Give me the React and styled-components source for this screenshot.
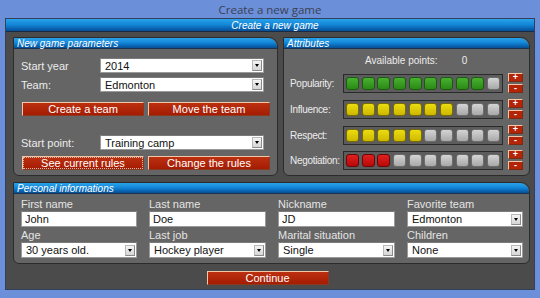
import React from "react";
import styled, { createGlobalStyle, css } from "styled-components";

const Global = createGlobalStyle`
  html, body { margin: 0; padding: 0; }
  body { background: #6b8fd8; font-family: "Liberation Sans", Arial, sans-serif; }
  * { box-sizing: border-box; }
`;

const Root = styled.div`
  width: 540px;
  height: 298px;
  display: flex;
  flex-direction: column;
  padding: 0 5px 8px 5px;
  background: #6b8fd8;
`;

const TitleBar = styled.div`
  height: 18px;
  display: flex;
  align-items: center;
  justify-content: center;
  font-family: "Open Sans", "Liberation Sans", sans-serif;
  font-size: 11.5px;
  color: #3a3f55;
  padding-top: 1px;
`;

const Frame = styled.div`
  flex: 1;
  display: flex;
  flex-direction: column;
  background: #4b4b4b;
  border: 1px solid #33405a;
`;

const blueBar = css`
  background: linear-gradient(#2aa2ea 0%, #1488d8 45%, #0a68b8 75%, #064f92 100%);
  color: #fff;
  font-style: italic;
  font-size: 10px;
  display: flex;
  align-items: center;
`;

const FrameHeader = styled.div`
  ${blueBar};
  height: 13px;
  justify-content: center;
  border-bottom: 1px solid #1b2a44;
  padding-left: 10px;
`;

const Content = styled.div`
  flex: 1;
  display: flex;
  flex-direction: column;
  padding: 5px 4px 0 7px;
`;

const TopRow = styled.div`
  display: grid;
  grid-template-columns: 265px 1fr;
  column-gap: 5px;
  height: 139px;
`;

const Panel = styled.div`
  display: flex;
  flex-direction: column;
  background: #656565;
  border: 1px solid #2c2c2c;
  border-radius: 0 9px 6px 6px;
  overflow: hidden;
  height: ${(p) => p.$h}px;
  margin-top: ${(p) => p.$mt || 0}px;
`;

const PanelHeader = styled.div`
  ${blueBar};
  height: 11px;
  padding-left: 3px;
  border-bottom: 1px solid #1d3150;
  border-top-right-radius: 9px;
  flex: none;
`;

const ParamsBody = styled.div`
  padding: 9px 13px 0 7px;
  display: flex;
  flex-direction: column;
`;

const FieldRow = styled.div`
  display: grid;
  grid-template-columns: 79px 164px;
  align-items: center;
  height: 15px;
  margin-top: ${(p) => p.$mt || 0}px;
`;

const Label = styled.span`
  color: #ececec;
  font-size: ${(p) => p.$fs || 11}px;
  letter-spacing: ${(p) => p.$ls || 0}px;
  white-space: nowrap;
`;

const SelectBox = styled.div`
  height: ${(p) => p.$h || 15}px;
  width: 100%;
  background: #fff;
  border: 1px solid #9a9a9a;
  border-top-color: #7a7a7a;
  display: flex;
  align-items: center;
  padding: 0 1px 0 4px;
  font-size: 11px;
  color: #111;
`;

const SelectText = styled.span`
  flex: 1;
  white-space: nowrap;
  overflow: hidden;
`;

const ArrowBtn = styled.span`
  width: 10px;
  height: 11px;
  background: linear-gradient(#f4f4f4, #d6d6d6);
  border: 1px solid #b8b8b8;
  border-right-color: #8a8a8a;
  border-bottom-color: #8a8a8a;
  display: flex;
  align-items: center;
  justify-content: center;
  &::after {
    content: "";
    border-left: 2.5px solid transparent;
    border-right: 2.5px solid transparent;
    border-top: 3px solid #000;
  }
`;

function Select({ value, h }) {
  return (
    <SelectBox $h={h}>
      <SelectText>{value}</SelectText>
      <ArrowBtn />
    </SelectBox>
  );
}

const ButtonRow = styled.div`
  display: grid;
  grid-template-columns: 122px 122px;
  column-gap: 4px;
  margin-top: ${(p) => p.$mt || 0}px;
  margin-left: 1px;
`;

const RedButton = styled.button`
  height: 14px;
  padding: 0;
  background: linear-gradient(#bc3010, #a41c02);
  border: 1px solid #f0c8a8;
  border-right-color: #8a3a20;
  border-bottom-color: #8a3a20;
  color: #fff;
  font-family: "Liberation Sans", Arial, sans-serif;
  font-size: 11px;
  line-height: 12px;
  cursor: pointer;
  ${(p) =>
    p.$focus &&
    css`
      outline: 1px dotted #d8b8a8;
      outline-offset: -2px;
    `}
`;

const AttrBody = styled.div`
  display: flex;
  flex-direction: column;
  padding: 5px 6px 0 6px;
`;

const Available = styled.div`
  display: flex;
  gap: 24px;
  color: #ececec;
  font-size: 10px;
  height: 12px;
  align-items: center;
  padding-left: 75px;
`;

const AttrRow = styled.div`
  display: grid;
  grid-template-columns: 53px 160px 20px;
  align-items: center;
  height: 20px;
  margin-top: ${(p) => p.$mt}px;
`;

const Bar = styled.div`
  height: 19px;
  border: 1px solid #2a2a2a;
  background: #5c5c5c;
  display: flex;
  align-items: center;
  justify-content: space-between;
  padding: 0 2px;
`;

const cellColors = {
  green: ["#48b030", "#2a8a16", "#1c5a0e"],
  yellow: ["#ecdc10", "#ccb800", "#7a6c00"],
  red: ["#e02020", "#b80808", "#6a0606"],
  gray: ["#d4d4d4", "#a8a8a8", "#6c6c6c"],
};

const Cell = styled.span`
  width: 13px;
  height: 13px;
  border-radius: 3px;
  background: linear-gradient(
    ${(p) => cellColors[p.$c][0]},
    ${(p) => cellColors[p.$c][1]}
  );
  border: 1px solid ${(p) => cellColors[p.$c][2]};
`;

const PmCol = styled.div`
  display: flex;
  flex-direction: column;
  gap: 2px;
  margin-left: 5px;
`;

const PmBtn = styled.span`
  width: 15px;
  height: 9px;
  background: #b42408;
  border: 1px solid #f0c8a8;
  border-right-color: #7a2a10;
  border-bottom-color: #7a2a10;
  color: #fff;
  font-size: 9px;
  line-height: 7px;
  font-weight: bold;
  display: flex;
  justify-content: center;
`;

const PersonalGrid = styled.div`
  display: grid;
  grid-template-columns: 116px 117px 117px 116px;
  column-gap: 12px;
  padding: 4px 0 0 7px;
`;

const FieldCol = styled.div`
  display: flex;
  flex-direction: column;
`;

const SmallLabel = styled.span`
  color: #e4e4e4;
  font-size: 11px;
  height: ${(p) => p.$h}px;
  display: flex;
  align-items: flex-end;
  padding-bottom: 1px;
`;

const TextInput = styled.input`
  height: 16px;
  width: 100%;
  border: 1px solid #9a9a9a;
  border-top-color: #7a7a7a;
  padding: 0 3px;
  font-family: "Liberation Sans", Arial, sans-serif;
  font-size: 11px;
  color: #111;
  outline: none;
`;

const Footer = styled.div`
  display: flex;
  justify-content: center;
  margin-top: 7px;
  padding-right: 8px;
`;

const ContinueButton = styled(RedButton)`
  width: 122px;
  height: 14px;
`;

const attrs = [
  { name: "Popularity:", n: 9, c: "green", mt: 7 },
  { name: "Influence:", n: 7, c: "yellow", mt: 6 },
  { name: "Respect:", n: 5, c: "yellow", mt: 6 },
  { name: "Negotiation:", n: 3, c: "red", mt: 5 },
];

export default function App() {
  return (
    <>
      <Global />
      <Root>
        <TitleBar>Create a new game</TitleBar>
        <Frame>
          <FrameHeader>Create a new game</FrameHeader>
          <Content>
            <TopRow>
              <Panel $h={139}>
                <PanelHeader>New game parameters</PanelHeader>
                <ParamsBody>
                  <FieldRow>
                    <Label>Start year</Label>
                    <Select value="2014" />
                  </FieldRow>
                  <FieldRow $mt={4}>
                    <Label>Team:</Label>
                    <Select value="Edmonton" />
                  </FieldRow>
                  <ButtonRow $mt={10}>
                    <RedButton>Create a team</RedButton>
                    <RedButton>Move the team</RedButton>
                  </ButtonRow>
                  <FieldRow $mt={19}>
                    <Label>Start point:</Label>
                    <Select value="Training camp" />
                  </FieldRow>
                  <ButtonRow $mt={6}>
                    <RedButton $focus>See current rules</RedButton>
                    <RedButton>Change the rules</RedButton>
                  </ButtonRow>
                </ParamsBody>
              </Panel>
              <Panel $h={139}>
                <PanelHeader>Attributes</PanelHeader>
                <AttrBody>
                  <Available>
                    <span>Available points:</span>
                    <span>0</span>
                  </Available>
                  {attrs.map((a) => (
                    <AttrRow key={a.name} $mt={a.mt}>
                      <Label $fs={10} $ls={-0.3}>{a.name}</Label>
                      <Bar>
                        {Array.from({ length: 10 }, (_, i) => (
                          <Cell key={i} $c={i < a.n ? a.c : "gray"} />
                        ))}
                      </Bar>
                      <PmCol>
                        <PmBtn>+</PmBtn>
                        <PmBtn>-</PmBtn>
                      </PmCol>
                    </AttrRow>
                  ))}
                </AttrBody>
              </Panel>
            </TopRow>
            <Panel $h={82} $mt={6}>
              <PanelHeader>Personal informations</PanelHeader>
              <PersonalGrid>
                <FieldCol>
                  <SmallLabel $h={13}>First name</SmallLabel>
                  <TextInput defaultValue="John" />
                  <SmallLabel $h={15}>Age</SmallLabel>
                  <Select value="30 years old." h={16} />
                </FieldCol>
                <FieldCol>
                  <SmallLabel $h={13}>Last name</SmallLabel>
                  <TextInput defaultValue="Doe" />
                  <SmallLabel $h={15}>Last job</SmallLabel>
                  <Select value="Hockey player" h={16} />
                </FieldCol>
                <FieldCol>
                  <SmallLabel $h={13}>Nickname</SmallLabel>
                  <TextInput defaultValue="JD" />
                  <SmallLabel $h={15}>Marital situation</SmallLabel>
                  <Select value="Single" h={16} />
                </FieldCol>
                <FieldCol>
                  <SmallLabel $h={13}>Favorite team</SmallLabel>
                  <Select value="Edmonton" h={16} />
                  <SmallLabel $h={15}>Children</SmallLabel>
                  <Select value="None" h={16} />
                </FieldCol>
              </PersonalGrid>
            </Panel>
            <Footer>
              <ContinueButton>Continue</ContinueButton>
            </Footer>
          </Content>
        </Frame>
      </Root>
    </>
  );
}
